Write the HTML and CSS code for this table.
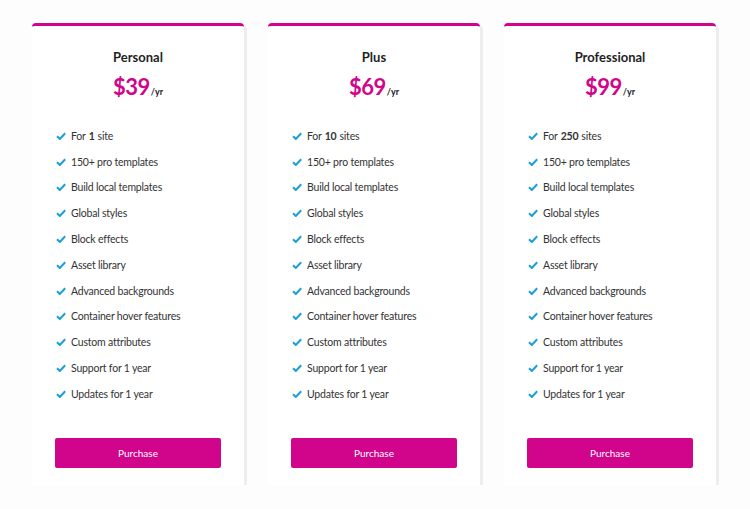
FILE: index.html
```html
<!DOCTYPE html>
<html lang="en">
<head>
<meta charset="utf-8">
<title>Pricing</title>
<link rel="stylesheet" href="styles.css">
</head>
<body>
<main class="plans">
  <section class="card">
    <h2 class="card-title">Personal</h2>
    <p class="price"><span class="amount">$39</span><span class="per">/yr</span></p>
    <ul class="features">
      <li><svg class="check" viewBox="0 0 10 8"><path d="M1 4.2 L3.8 7 L9.2 1.2"/></svg>For <b>1</b> site</li>
      <li><svg class="check" viewBox="0 0 10 8"><path d="M1 4.2 L3.8 7 L9.2 1.2"/></svg>150+ pro templates</li>
      <li><svg class="check" viewBox="0 0 10 8"><path d="M1 4.2 L3.8 7 L9.2 1.2"/></svg>Build local templates</li>
      <li><svg class="check" viewBox="0 0 10 8"><path d="M1 4.2 L3.8 7 L9.2 1.2"/></svg>Global styles</li>
      <li><svg class="check" viewBox="0 0 10 8"><path d="M1 4.2 L3.8 7 L9.2 1.2"/></svg>Block effects</li>
      <li><svg class="check" viewBox="0 0 10 8"><path d="M1 4.2 L3.8 7 L9.2 1.2"/></svg>Asset library</li>
      <li><svg class="check" viewBox="0 0 10 8"><path d="M1 4.2 L3.8 7 L9.2 1.2"/></svg>Advanced backgrounds</li>
      <li><svg class="check" viewBox="0 0 10 8"><path d="M1 4.2 L3.8 7 L9.2 1.2"/></svg>Container hover features</li>
      <li><svg class="check" viewBox="0 0 10 8"><path d="M1 4.2 L3.8 7 L9.2 1.2"/></svg>Custom attributes</li>
      <li><svg class="check" viewBox="0 0 10 8"><path d="M1 4.2 L3.8 7 L9.2 1.2"/></svg>Support for 1 year</li>
      <li><svg class="check" viewBox="0 0 10 8"><path d="M1 4.2 L3.8 7 L9.2 1.2"/></svg>Updates for 1 year</li>
    </ul>
    <a class="buy" href="#">Purchase</a>
  </section>
  <section class="card">
    <h2 class="card-title">Plus</h2>
    <p class="price"><span class="amount">$69</span><span class="per">/yr</span></p>
    <ul class="features">
      <li><svg class="check" viewBox="0 0 10 8"><path d="M1 4.2 L3.8 7 L9.2 1.2"/></svg>For <b>10</b> sites</li>
      <li><svg class="check" viewBox="0 0 10 8"><path d="M1 4.2 L3.8 7 L9.2 1.2"/></svg>150+ pro templates</li>
      <li><svg class="check" viewBox="0 0 10 8"><path d="M1 4.2 L3.8 7 L9.2 1.2"/></svg>Build local templates</li>
      <li><svg class="check" viewBox="0 0 10 8"><path d="M1 4.2 L3.8 7 L9.2 1.2"/></svg>Global styles</li>
      <li><svg class="check" viewBox="0 0 10 8"><path d="M1 4.2 L3.8 7 L9.2 1.2"/></svg>Block effects</li>
      <li><svg class="check" viewBox="0 0 10 8"><path d="M1 4.2 L3.8 7 L9.2 1.2"/></svg>Asset library</li>
      <li><svg class="check" viewBox="0 0 10 8"><path d="M1 4.2 L3.8 7 L9.2 1.2"/></svg>Advanced backgrounds</li>
      <li><svg class="check" viewBox="0 0 10 8"><path d="M1 4.2 L3.8 7 L9.2 1.2"/></svg>Container hover features</li>
      <li><svg class="check" viewBox="0 0 10 8"><path d="M1 4.2 L3.8 7 L9.2 1.2"/></svg>Custom attributes</li>
      <li><svg class="check" viewBox="0 0 10 8"><path d="M1 4.2 L3.8 7 L9.2 1.2"/></svg>Support for 1 year</li>
      <li><svg class="check" viewBox="0 0 10 8"><path d="M1 4.2 L3.8 7 L9.2 1.2"/></svg>Updates for 1 year</li>
    </ul>
    <a class="buy" href="#">Purchase</a>
  </section>
  <section class="card">
    <h2 class="card-title">Professional</h2>
    <p class="price"><span class="amount">$99</span><span class="per">/yr</span></p>
    <ul class="features">
      <li><svg class="check" viewBox="0 0 10 8"><path d="M1 4.2 L3.8 7 L9.2 1.2"/></svg>For <b>250</b> sites</li>
      <li><svg class="check" viewBox="0 0 10 8"><path d="M1 4.2 L3.8 7 L9.2 1.2"/></svg>150+ pro templates</li>
      <li><svg class="check" viewBox="0 0 10 8"><path d="M1 4.2 L3.8 7 L9.2 1.2"/></svg>Build local templates</li>
      <li><svg class="check" viewBox="0 0 10 8"><path d="M1 4.2 L3.8 7 L9.2 1.2"/></svg>Global styles</li>
      <li><svg class="check" viewBox="0 0 10 8"><path d="M1 4.2 L3.8 7 L9.2 1.2"/></svg>Block effects</li>
      <li><svg class="check" viewBox="0 0 10 8"><path d="M1 4.2 L3.8 7 L9.2 1.2"/></svg>Asset library</li>
      <li><svg class="check" viewBox="0 0 10 8"><path d="M1 4.2 L3.8 7 L9.2 1.2"/></svg>Advanced backgrounds</li>
      <li><svg class="check" viewBox="0 0 10 8"><path d="M1 4.2 L3.8 7 L9.2 1.2"/></svg>Container hover features</li>
      <li><svg class="check" viewBox="0 0 10 8"><path d="M1 4.2 L3.8 7 L9.2 1.2"/></svg>Custom attributes</li>
      <li><svg class="check" viewBox="0 0 10 8"><path d="M1 4.2 L3.8 7 L9.2 1.2"/></svg>Support for 1 year</li>
      <li><svg class="check" viewBox="0 0 10 8"><path d="M1 4.2 L3.8 7 L9.2 1.2"/></svg>Updates for 1 year</li>
    </ul>
    <a class="buy" href="#">Purchase</a>
  </section>
</main>
</body>
</html>
```
FILE: styles.css
```css
* { box-sizing: border-box; }
html, body { margin: 0; padding: 0; }
body {
  background: #fdfdfd;
  font-family: Lato, "Open Sans", sans-serif;
  color: #2b2b2b;
}
.plans {
  display: flex;
  gap: 24px;
  padding: 23px 0 0 32px;
}
.card {
  width: 212px;
  height: 462px;
  background: #fff;
  border-top: 3px solid #d1058c;
  border-radius: 4px 4px 0 0;
  box-shadow: 3px 3px 0 #ededed;
  padding: 22px 23px 0 23px;
  display: flex;
  flex-direction: column;
}
.card-title {
  margin: 0;
  text-align: center;
  font-size: 13px;
  font-weight: 700;
  line-height: 18px;
  color: #1f1f1f;
}
.price {
  margin: 7px 0 0;
  text-align: center;
  line-height: 28px;
  height: 28px;
  color: #d1058c;
}
.amount {
  font-size: 22px;
  font-weight: 700;
  letter-spacing: -0.5px;
}
.per {
  font-size: 9px;
  font-weight: 700;
  color: #222;
  margin-left: 1px;
}
.features {
  list-style: none;
  margin: 22px 0 0;
  padding: 0;
}
.features li {
  display: flex;
  align-items: center;
  height: 25.8px;
  font-size: 10.5px;
  letter-spacing: -0.2px;
  color: #333;
}
.features b { font-weight: 700; margin: 0 3px; }
.check {
  width: 10px;
  height: 8px;
  margin-left: 1px;
  margin-right: 5px;
  fill: none;
  stroke: #1a9fd9;
  stroke-width: 2;
}
.buy {
  display: flex;
  align-items: center;
  justify-content: center;
  height: 30px;
  margin-top: 31px;
  background: #d1058c;
  color: #fff;
  text-decoration: none;
  font-size: 10px;
  border-radius: 2px;
}
```
